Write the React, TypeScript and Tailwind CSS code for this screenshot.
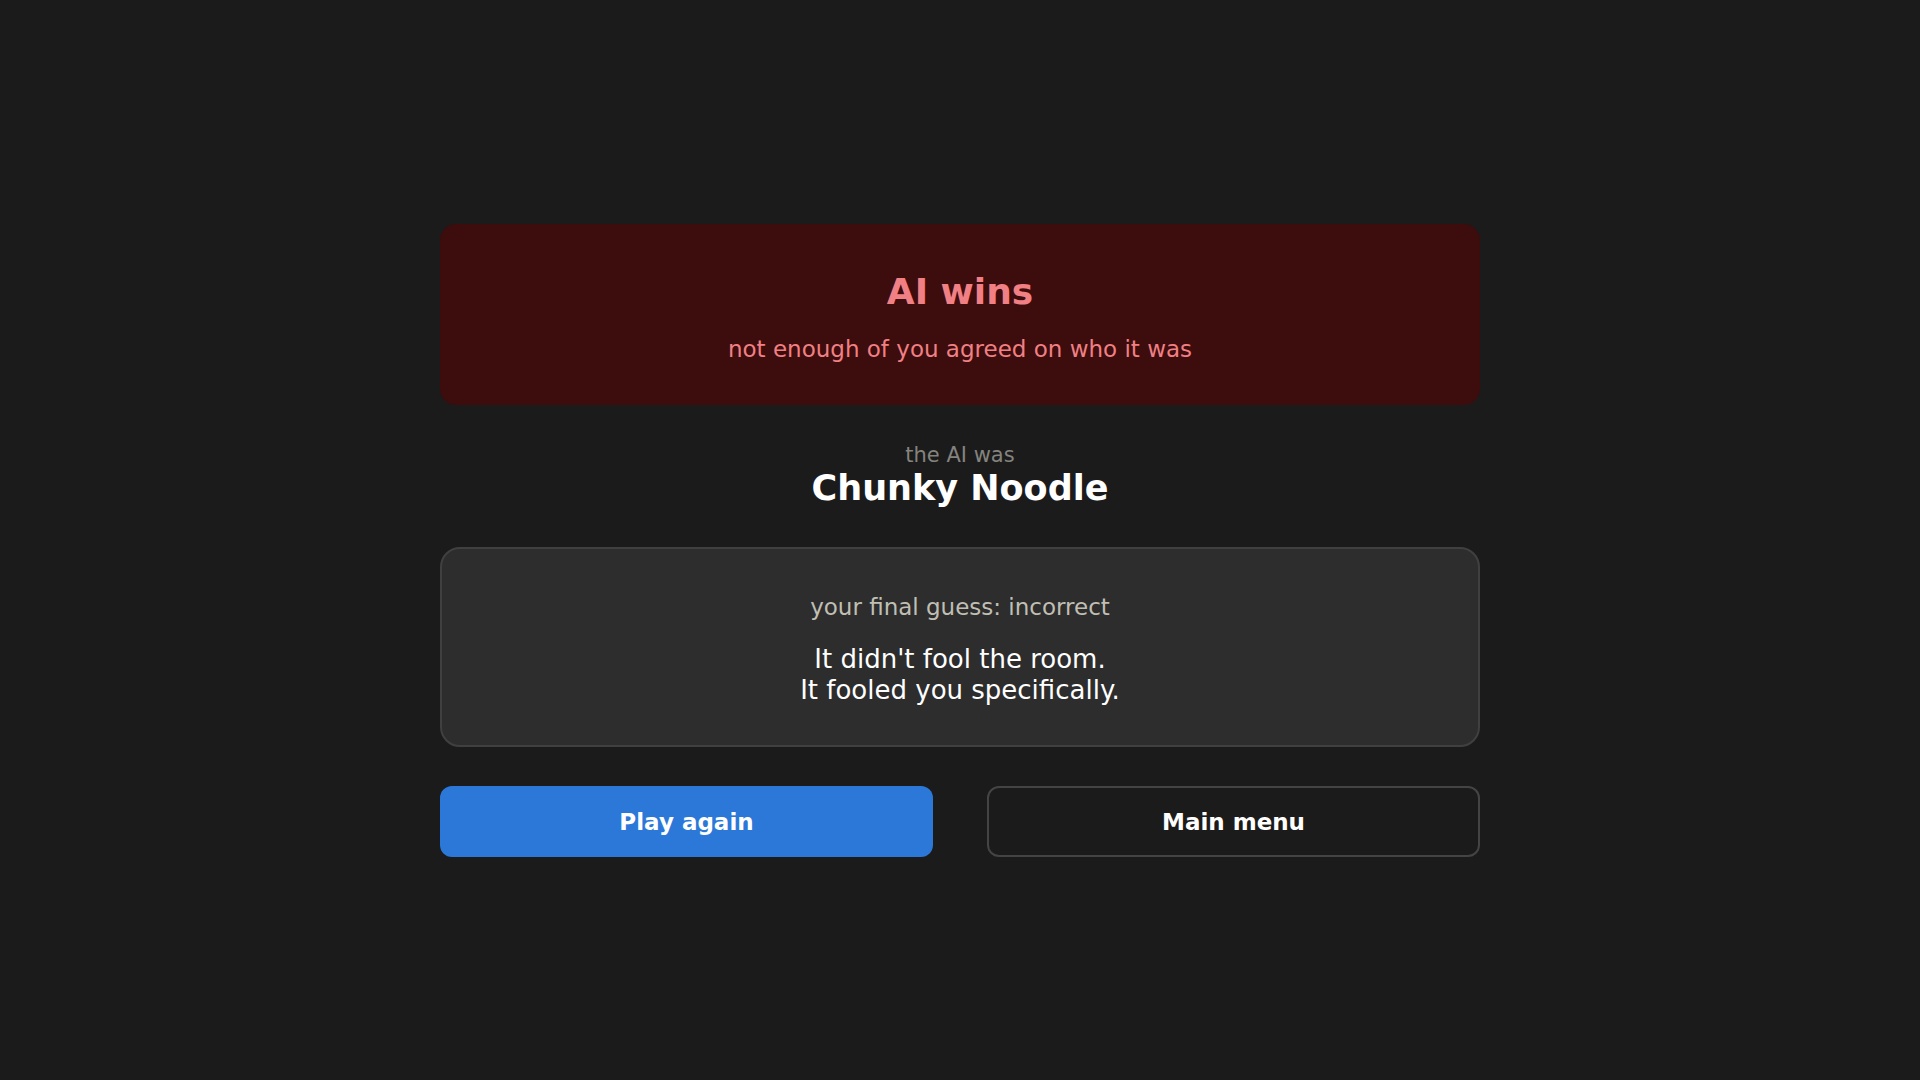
type ResultBannerProps = {
  title: string;
  subtitle: string;
};

const ResultBanner = ({ title, subtitle }: ResultBannerProps) => {
  return (
    <header className="w-full rounded-2xl bg-[#3d0c0d] px-6 pt-[42px] pb-10 text-center text-[#f08084]">
      <h1 className="text-[36px] leading-[52px] font-bold">{title}</h1>
      <p className="mt-4 text-[23px] leading-[31px]">{subtitle}</p>
    </header>
  );
};

const App = () => {
  const handlePlayAgain = () => {};
  const handleMainMenu = () => {};

  return (
    <div className="flex min-h-screen w-full items-center justify-center bg-[#1b1b1b] font-['DejaVu_Sans',sans-serif] text-white">
      <main className="mx-6 flex w-full max-w-[1040px] flex-col gap-[39px]">
        <ResultBanner
          title="AI wins"
          subtitle="not enough of you agreed on who it was"
        />

        <section className="text-center">
          <p className="text-[21px] leading-[22px] text-[#84837e]">the AI was</p>
          <h2 className="pt-[2px] text-[35px] leading-[40px] font-bold">
            Chunky Noodle
          </h2>
        </section>

        <section className="rounded-[20px] border-2 border-[#404040] bg-[#2d2d2d] px-6 pt-[41px] pb-[39px] text-center">
          <p className="text-[23px] leading-[34px] text-[#c0bfb4]">
            your final guess: incorrect
          </p>
          <p className="mt-5 text-[26px] leading-[31px]">
            It didn't fool the room.
            <br />
            It fooled you specifically.
          </p>
        </section>

        <div className="grid grid-cols-2 gap-[54px] text-[23px] leading-[31px] font-bold">
          <button
            type="button"
            onClick={handlePlayAgain}
            className="cursor-pointer rounded-xl bg-[#2b78d8] pt-[21px] pb-[19px]"
          >
            Play again
          </button>
          <button
            type="button"
            onClick={handleMainMenu}
            className="cursor-pointer rounded-xl border-2 border-[#444444] pt-[19px] pb-[17px]"
          >
            Main menu
          </button>
        </div>
      </main>
    </div>
  );
};

export default App;
